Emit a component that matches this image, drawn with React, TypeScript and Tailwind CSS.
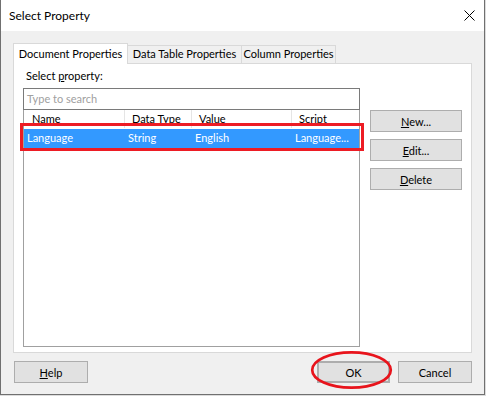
import React from "react";

function Btn({ children, className = "" }: { children: React.ReactNode; className?: string }) {
  return (
    <div
      className={`flex items-center justify-center h-[22px] bg-[#e1e1e1] border border-[#adadad] text-[11px] leading-none ${className}`}
    >
      {children}
    </div>
  );
}

export default function App() {
  return (
    <div className="relative w-[486px] h-[396px] bg-[#dcdcdc] font-['Lato',sans-serif] text-[11px] text-black overflow-hidden">
      <div className="flex flex-col w-[485px] h-[395px] border-x border-b border-[#707070] bg-[#f0f0f0]">
        {/* Title bar */}
        <div className="flex items-center justify-between h-[31px] bg-white pl-[8px] pr-[9px]">
          <span className="text-[12px]">Select Property</span>
          <svg width="11" height="11" viewBox="0 0 11 11">
            <path d="M0.5 0.5 L10.5 10.5 M10.5 0.5 L0.5 10.5" stroke="#000" strokeWidth="1" />
          </svg>
        </div>

        {/* Body */}
        <div className="flex flex-col flex-1 px-[12px] pt-[12px]">
          {/* Tabs */}
          <div className="flex items-end h-[20px]">
            <div className="relative z-10 flex items-center justify-center w-[115px] h-[21px] -mb-px bg-white border-x border-t border-[#d9d9d9]">
              Document Properties
            </div>
            <div className="flex items-center justify-center w-[115px] h-[18px] -ml-px bg-[#f0f0f0] border-x border-t border-[#d9d9d9]">
              Data Table Properties
            </div>
            <div className="flex items-center justify-center w-[95px] h-[18px] -ml-px bg-[#f0f0f0] border-x border-t border-[#d9d9d9]">
              Column Properties
            </div>
          </div>

          {/* Panel */}
          <div className="flex h-[290px] w-[459px] bg-white border border-[#d9d9d9] px-[9px] pt-[5px]">
            <div className="flex flex-col w-[337px]">
              <div className="h-[14px] leading-[14px] pl-[3px]">
                Select <span className="underline">p</span>roperty:
              </div>
              <div className="flex items-center h-[22px] mt-[5px] border border-[#7a7a7a] pl-[3px] text-[#a0a0a0]">
                Type to search
              </div>
              <div className="flex flex-col h-[237px] border-x border-b border-[#a0a0a0]">
                <div className="flex h-[18px] items-center">
                  <div className="w-[101px] h-full flex items-center pl-[8px] border-r border-[#e5e5e5]">Name</div>
                  <div className="w-[67px] h-full flex items-center pl-[7px] border-r border-[#e5e5e5]">Data Type</div>
                  <div className="w-[100px] h-full flex items-center pl-[7px] border-r border-[#e5e5e5]">Value</div>
                  <div className="flex-1 h-full flex items-center pl-[7px]">Script</div>
                </div>
                <div className="flex h-[19px] mt-px items-center bg-[#3399ff] text-white">
                  <div className="w-[101px] pl-[3px]">Language</div>
                  <div className="w-[67px] pl-[3px]">String</div>
                  <div className="w-[100px] pl-[3px]">English</div>
                  <div className="flex-1 pl-[3px]">Language...</div>
                </div>
              </div>
            </div>
            <div className="flex flex-col gap-[7px] ml-[10px] mt-[41px]">
              <Btn className="w-[92px]">
                <span><span className="underline">N</span>ew...</span>
              </Btn>
              <Btn className="w-[92px]">
                <span><span className="underline">E</span>dit...</span>
              </Btn>
              <Btn className="w-[92px]">
                <span><span className="underline">D</span>elete</span>
              </Btn>
            </div>
          </div>

          {/* Bottom buttons */}
          <div className="flex justify-between mt-[8px]">
            <Btn className="w-[74px] ml-[1px]">
              <span><span className="underline">H</span>elp</span>
            </Btn>
            <div className="flex gap-[8px]">
              <Btn className="w-[73px] border-2 border-[#0078d7]">OK</Btn>
              <Btn className="w-[74px]">Cancel</Btn>
            </div>
          </div>
        </div>
      </div>

      {/* Red annotations */}
      <div className="absolute left-[20px] top-[123px] w-[344px] h-[28px] border-[3px] border-[#ed1c24]" />
      <svg className="absolute left-[309px] top-[349px]" width="86" height="43" viewBox="0 0 86 43">
        <ellipse cx="42.5" cy="21" rx="39.3" ry="17.7" fill="none" stroke="#e8141c" strokeWidth="2.7" />
      </svg>
    </div>
  );
}
